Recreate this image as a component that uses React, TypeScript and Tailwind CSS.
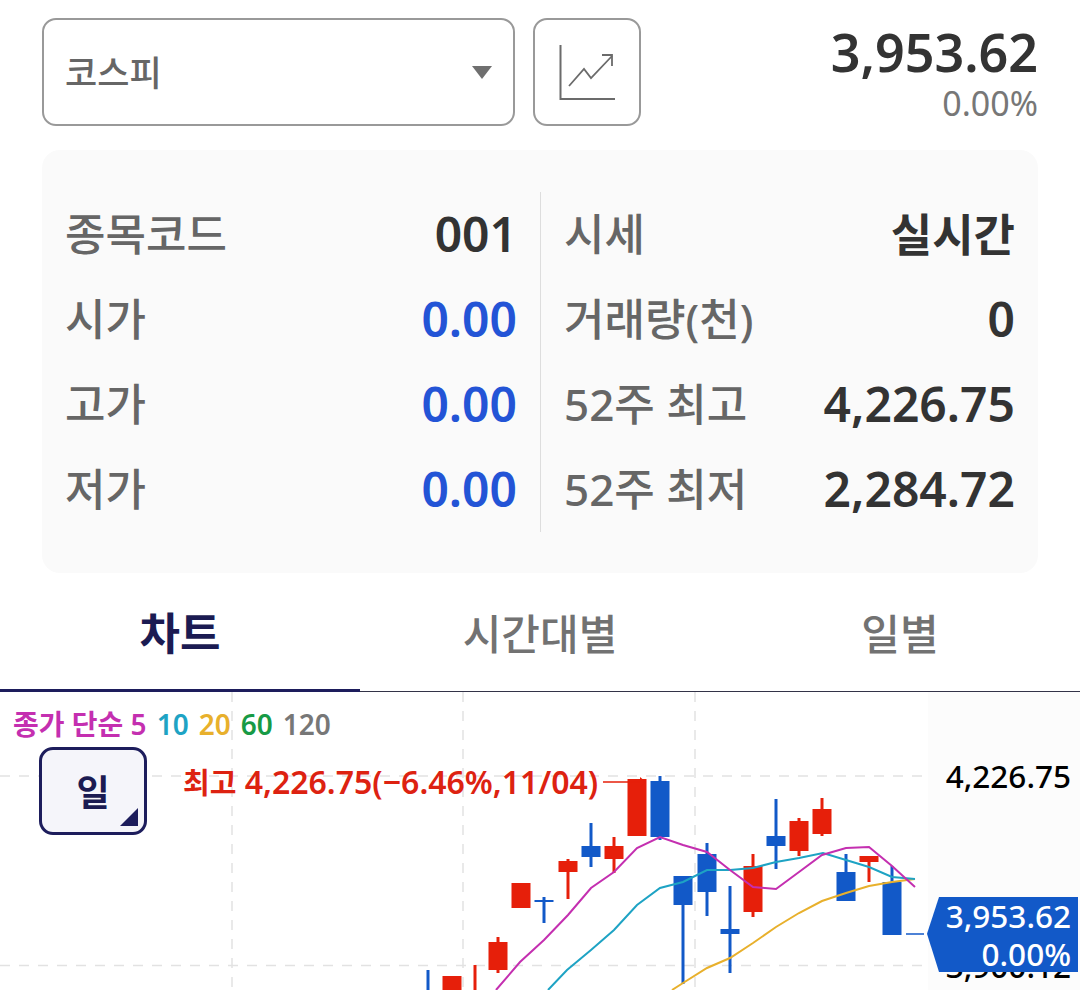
const FONT = "font-['Noto_Sans','Noto_Sans_CJK_KR',sans-serif]";

type Candle = { x: number; top: number; bottom: number; hi: number; lo: number; up: boolean };

const candles: Candle[] = [
  { x: 428, top: 990, bottom: 990, hi: 970, lo: 990, up: false },
  { x: 452, top: 976, bottom: 995, hi: 976, lo: 995, up: true },
  { x: 475, top: 990, bottom: 990, hi: 965, lo: 990, up: true },
  { x: 498, top: 942, bottom: 970, hi: 937, lo: 973, up: true },
  { x: 521, top: 883, bottom: 908, hi: 883, lo: 908, up: true },
  { x: 544, top: 900, bottom: 902, hi: 897, lo: 923, up: false },
  { x: 568, top: 861, bottom: 872, hi: 859, lo: 899, up: true },
  { x: 591, top: 846, bottom: 857, hi: 823, lo: 867, up: false },
  { x: 614, top: 846, bottom: 859, hi: 837, lo: 873, up: true },
  { x: 637, top: 779, bottom: 836, hi: 779, lo: 836, up: true },
  { x: 660, top: 781, bottom: 837, hi: 776, lo: 840, up: false },
  { x: 683, top: 876, bottom: 905, hi: 876, lo: 984, up: false },
  { x: 707, top: 854, bottom: 892, hi: 843, lo: 916, up: false },
  { x: 730, top: 929, bottom: 934, hi: 886, lo: 973, up: false },
  { x: 753, top: 866, bottom: 912, hi: 854, lo: 917, up: true },
  { x: 776, top: 836, bottom: 846, hi: 799, lo: 869, up: false },
  { x: 799, top: 821, bottom: 851, hi: 818, lo: 856, up: true },
  { x: 822, top: 809, bottom: 834, hi: 798, lo: 836, up: true },
  { x: 846, top: 872, bottom: 901, hi: 854, lo: 901, up: false },
  { x: 869, top: 856, bottom: 862, hi: 856, lo: 882, up: true },
  { x: 892, top: 882, bottom: 935, hi: 866, lo: 935, up: false },
];

const ma5 = "496,990 520,962 544,940 568,915 591,888 614,872 637,848 660,837 683,845 707,852 730,870 753,887 776,889 799,872 822,855 846,848 869,847 892,866 915,887";
const ma10 = "548,990 567,970 591,950 614,930 637,905 660,888 683,882 707,870 730,870 753,868 776,862 799,858 823,853 846,860 869,867 892,877 915,879";
const ma20 = "672,990 683,983 707,968 730,958 753,943 776,927 799,913 822,901 846,893 869,886 892,882 915,879";

function Row({ label, value, valueClass }: { label: string; value: string; valueClass: string }) {
  return (
    <div className="flex h-[85px] items-center justify-between">
      <span className="text-[44px] font-medium leading-none text-[#666666]">{label}</span>
      <span className={`leading-none ${valueClass}`}>{value}</span>
    </div>
  );
}

function CandleChart() {
  return (
    <svg className="absolute left-0 top-0" width="1080" height="298" viewBox="0 692 1080 298">
      <g stroke="#e2e2e2" strokeWidth="1.5" strokeDasharray="10 9">
        <line x1="232" y1="692" x2="232" y2="990" />
        <line x1="463" y1="692" x2="463" y2="990" />
        <line x1="695" y1="692" x2="695" y2="990" />
        <line x1="0" y1="776" x2="928" y2="776" />
        <line x1="0" y1="965.5" x2="928" y2="965.5" />
      </g>
      {candles.map((c) => {
        const color = c.up ? "#e61f0a" : "#1259c8";
        return (
          <g key={c.x}>
            <line x1={c.x} y1={c.hi} x2={c.x} y2={c.lo} stroke={color} strokeWidth="3" />
            {c.bottom > c.top && (
              <rect x={c.x - 9.5} y={c.top} width="19" height={c.bottom - c.top} fill={color} />
            )}
          </g>
        );
      })}
      <line x1="906" y1="934" x2="924" y2="934" stroke="#1259c8" strokeWidth="1.5" />
      <polyline points={ma20} fill="none" stroke="#e8b02c" strokeWidth="2" />
      <polyline points={ma10} fill="none" stroke="#1ea3c4" strokeWidth="2" />
      <polyline points={ma5} fill="none" stroke="#c42fb0" strokeWidth="2" />
      <line x1="603" y1="782" x2="645" y2="782" stroke="#e61f0a" strokeWidth="1.5" />
      <path d="M640 777 L646 782 L640 787" fill="#e61f0a" />
    </svg>
  );
}

export default function App() {
  return (
    <div className={`h-[990px] w-[1080px] overflow-hidden bg-white ${FONT}`}>
      {/* Top controls */}
      <div className="flex h-[150px] items-start pl-[42px] pr-[42px] pt-[18px]">
        <div className="flex h-[108px] w-[473px] items-center justify-between rounded-[14px] border-2 border-[#999999] pl-[21px] pr-[21px]">
          <span className="text-[35px] font-medium leading-none text-[#666666]">코스피</span>
          <span className="h-0 w-0 border-x-[10px] border-t-[13px] border-x-transparent border-t-[#6f6f6f]" />
        </div>
        <button className="ml-[18px] flex h-[108px] w-[108px] items-center justify-center rounded-[14px] border-2 border-[#999999]">
          <svg width="56" height="56" viewBox="0 0 56 56" fill="none" stroke="#6b6b6b">
            <path d="M1.5 1 V55 H56" strokeWidth="2" />
            <path d="M10 42 L25 25 L32 34 L53 12" strokeWidth="1.8" />
            <path d="M43 11 H53 V22" strokeWidth="1.8" />
          </svg>
        </button>
        <div className="ml-auto mt-[6px] flex flex-col items-end">
          <span className="text-[52px] font-semibold leading-[56px] text-[#333333]">3,953.62</span>
          <span className="text-[34px] leading-[46px] text-[#777777]">0.00%</span>
        </div>
      </div>

      {/* Quote panel */}
      <div className="mx-[42px] flex h-[423px] items-center rounded-[18px] bg-[#fafafa] px-[23px]">
        <div className="h-[340px] w-[452px]">
          <Row label="종목코드" value="001" valueClass="text-[48px] font-semibold text-[#333333]" />
          <Row label="시가" value="0.00" valueClass="text-[48px] font-semibold text-[#2354d6]" />
          <Row label="고가" value="0.00" valueClass="text-[48px] font-semibold text-[#2354d6]" />
          <Row label="저가" value="0.00" valueClass="text-[48px] font-semibold text-[#2354d6]" />
        </div>
        <div className="mx-[23px] h-[340px] w-px bg-[#dddddd]" />
        <div className="h-[340px] flex-1">
          <Row label="시세" value="실시간" valueClass="text-[45px] font-bold text-[#333333]" />
          <Row label="거래량(천)" value="0" valueClass="text-[48px] font-semibold text-[#333333]" />
          <Row label="52주 최고" value="4,226.75" valueClass="text-[48px] font-semibold text-[#333333]" />
          <Row label="52주 최저" value="2,284.72" valueClass="text-[48px] font-semibold text-[#333333]" />
        </div>
      </div>

      {/* Tabs */}
      <div className="flex h-[119px] border-b border-[#333348]">
        <div className="-mb-px flex w-[360px] items-center justify-center border-b-[3px] border-[#1d1d5c] pt-[4px] text-[44px] font-bold text-[#1b1b52]">차트</div>
        <div className="flex w-[360px] items-center justify-center pt-[2px] text-[42px] font-medium text-[#727272]">시간대별</div>
        <div className="flex w-[360px] items-center justify-center pt-[2px] text-[42px] font-medium text-[#727272]">일별</div>
      </div>

      {/* Chart */}
      <div className="relative h-[298px] w-[1080px] overflow-hidden">
        <div className="absolute bottom-0 right-0 top-0 w-[152px] bg-[#fcfcfc]" />
        <CandleChart />
        <div className="absolute left-[13px] top-[14px] flex gap-[10px] text-[28px] font-semibold leading-9">
          <span className="text-[#c42fb0]">종가 단순 5</span>
          <span className="text-[#1ea3c4]">10</span>
          <span className="text-[#e8b02c]">20</span>
          <span className="text-[#179a45]">60</span>
          <span className="text-[#777777]">120</span>
        </div>
        <div className="absolute left-[39px] top-[55px] flex h-[88px] w-[108px] items-center justify-center rounded-[14px] border-[3px] border-[#1d1d5c] bg-[#f5f5fa] pt-[3px] text-[36px] font-bold text-[#1b1b52]">
          일
          <span className="absolute bottom-[6px] right-[6px] h-0 w-0 border-b-[18px] border-l-[18px] border-b-[#1d1d5c] border-l-transparent" />
        </div>
        <span className="absolute left-[183px] top-[72px] text-[32px] font-semibold leading-9 text-[#dd2211]"><span className="text-[29px]">최고</span> 4,226.75(−6.46%,11/04)</span>
        <span className="absolute right-[9px] top-[66px] text-[31.5px] font-medium leading-9 text-black">4,226.75</span>
        <span className="absolute right-[9px] top-[256px] text-[31.5px] font-medium leading-9 text-black">3,900.12</span>
        <div className="absolute left-[927px] top-[205px] h-[75px] w-[151px] bg-[#1259c8] pr-[7px] text-right text-[31.5px] font-medium leading-[38px] text-white [clip-path:polygon(0_49%,12px_0,100%_0,100%_100%,12px_100%)]">
          <div>3,953.62</div>
          <div>0.00%</div>
        </div>
      </div>
    </div>
  );
}
